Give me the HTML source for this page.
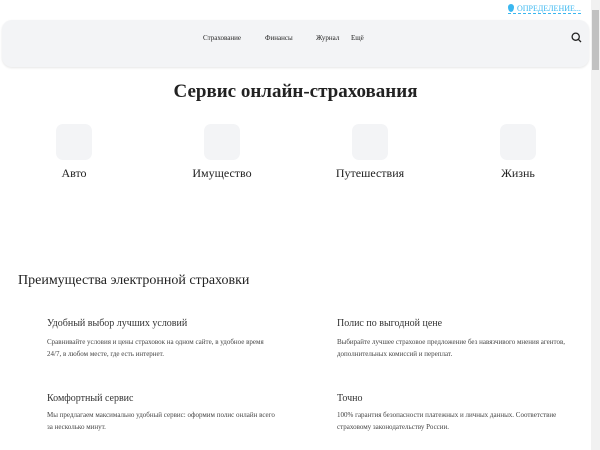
<!DOCTYPE html>
<html><head><meta charset="utf-8"><style>
body{margin:0;width:600px;height:450px;overflow:hidden;background:#fff;font-family:"Liberation Serif",serif;color:#222;position:relative}
.a{position:absolute;white-space:nowrap}
.hdr{position:absolute;left:2px;top:20px;width:587px;height:47px;background:#f3f4f6;border-radius:10px;box-shadow:0 1px 2px rgba(0,0,0,.1)}
.nav{font-size:7px;top:34px;color:#222}
.ic{position:absolute;top:124px;width:36px;height:36px;background:#f3f4f6;border-radius:7px}
.lb{font-size:12px;top:166px;width:148px;text-align:center}
.t{font-size:10px;color:#333}
.d{font-size:7px;color:#444;line-height:12px;white-space:normal;width:230px}
</style></head><body>
<div class="a" style="left:508px;top:4px;font-size:8px;color:#3ab7f0;border-bottom:1px dashed #3ab7f0;"><span style="display:inline-block;width:6px;height:8px;background:#3ab7f0;border-radius:50% 50% 50% 50%/40% 40% 60% 60%;vertical-align:-1px;margin-right:3px"></span>ОПРЕДЕЛЕНИЕ...</div>
<div class="hdr"></div>
<div class="a nav" style="left:203px">Страхование</div>
<div class="a nav" style="left:265px">Финансы</div>
<div class="a nav" style="left:316px">Журнал</div>
<div class="a nav" style="left:351px">Ещё</div>
<svg class="a" style="left:571px;top:32px" width="11" height="11" viewBox="0 0 11 11"><circle cx="4.7" cy="4.7" r="3.6" fill="none" stroke="#222" stroke-width="1.3"/><line x1="7.3" y1="7.3" x2="10" y2="10" stroke="#222" stroke-width="1.3"/></svg>
<div class="a" style="left:591px;top:0;width:9px;height:450px;background:#f1f1f1"></div>
<div class="a" style="left:592px;top:10px;width:7px;height:60px;background:#c1c1c1"></div>
<div class="a" style="left:0;width:591px;top:81px;text-align:center;font-size:19px;font-weight:bold;color:#222">Сервис онлайн-страхования</div>
<div class="ic" style="left:56px"></div><div class="ic" style="left:204px"></div><div class="ic" style="left:352px"></div><div class="ic" style="left:500px"></div>
<div class="a lb" style="left:0">Авто</div>
<div class="a lb" style="left:148px">Имущество</div>
<div class="a lb" style="left:296px">Путешествия</div>
<div class="a lb" style="left:444px">Жизнь</div>
<div class="a" style="left:18px;top:273px;font-size:14px;color:#222">Преимущества электронной страховки</div>
<div class="a t" style="left:47px;top:318px">Удобный выбор лучших условий</div>
<div class="a d" style="left:47px;top:336px">Сравнивайте условия и цены страховок на одном сайте, в удобное время 24/7, в любом месте, где есть интернет.</div>
<div class="a t" style="left:337px;top:318px">Полис по выгодной цене</div>
<div class="a d" style="left:337px;top:336px;width:240px">Выбирайте лучшее страховое предложение без навязчивого мнения агентов, дополнительных комиссий и переплат.</div>
<div class="a t" style="left:47px;top:393px">Комфортный сервис</div>
<div class="a d" style="left:47px;top:409px">Мы предлагаем максимально удобный сервис: оформим полис онлайн всего за несколько минут.</div>
<div class="a t" style="left:337px;top:393px">Точно</div>
<div class="a d" style="left:337px;top:409px">100% гарантия безопасности платежных и личных данных. Соответствие страховому законодательству России.</div>
</body></html>
